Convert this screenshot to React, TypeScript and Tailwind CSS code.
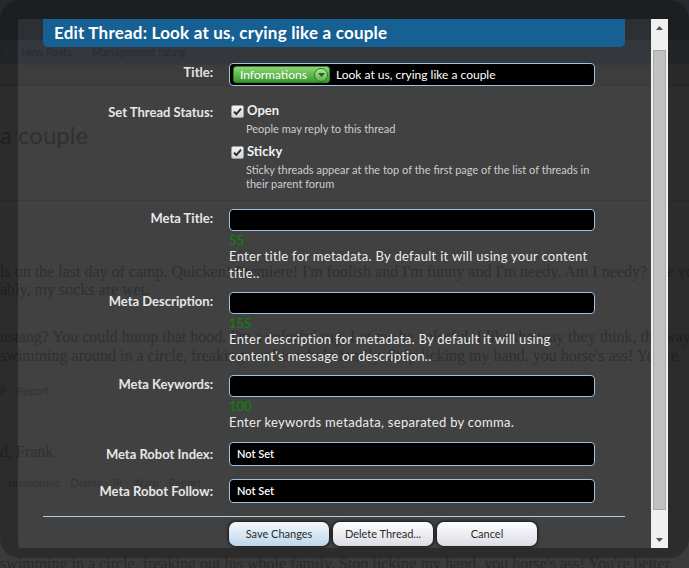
import type { FC, ReactNode } from 'react';

const labelCls = "text-right text-[13px] font-bold leading-[16px] text-[#e6e6e6]";
const inputCls = "w-[366px] rounded-[4px] border border-[#9fc0de] bg-black";
const serifCls = "whitespace-nowrap font-['Liberation_Serif',serif] text-[16px]";

const BackgroundPage: FC = () => {
  return (
    <div className="h-full text-[#2a2a2a]">
      <div className="h-[40px] bg-[#262a2e]" />
      <div className="flex h-[24px] items-center bg-[#2e3236] text-[11px] text-[#23272b]">
        <span>s</span>
        <span className="ml-[16px]">New Posts</span>
        <span className="ml-[20px]">Management rating</span>
      </div>
      <div className="h-[22px] border-y border-[#333333] bg-[#373737]" />
      <div className="mt-[35px] text-[24px] leading-[28px]">a couple</div>
      <div className="mt-[51px] h-px bg-[#353535]" />
      <div className={`mt-[62px] leading-[18px] ${serifCls}`}>
        <div>ls on the last day of camp. Quicken! Premiere! I'm foolish and I'm funny and I'm needy. Am I needy? Are you</div>
        <div>ably, my socks are wet.</div>
      </div>
      <div className={`mt-[28px] leading-[19px] ${serifCls}`}>
        <div>ustang? You could hump that hood. I'm a colorful rug. Let me be colorful. I like the way they think, the way</div>
        <div>swimming around in a circle, freaking out his whole family. Stop licking my hand, you horse's ass! You're</div>
      </div>
      <div className="mt-[18px] flex text-[11px] leading-[16px] text-[#2e2e2e]">
        <span>P</span>
        <span className="ml-[10px]">Report</span>
      </div>
      <div className={`mt-[44px] leading-[18px] ${serifCls}`}>d, Frank</div>
      <div className="mt-[14px] flex gap-[10px] pl-[9px] text-[11px] leading-[16px] text-[#2e2e2e]">
        <span>unapprove</span>
        <span>Delete</span>
        <span>IP</span>
        <span>Warn</span>
        <span>Report</span>
      </div>
      <div className={`mt-[64px] leading-[18px] ${serifCls}`}>
        swimming in a circle, freaking out his whole family. Stop licking my hand, you horse's ass! You're better
      </div>
    </div>
  );
};

const CheckBox: FC = () => (
  <span className="ml-[2px] flex h-[13px] w-[13px] items-center justify-center rounded-[2px] border border-[#9a9a9a] bg-gradient-to-b from-[#f4f4f4] to-[#d6d6d6]">
    <svg width="9" height="9" viewBox="0 0 9 9">
      <path d="M1 4.6 L3.4 7 L8 1.6" fill="none" stroke="#2a2a2a" strokeWidth="1.9" />
    </svg>
  </span>
);

interface RowProps {
  label: string;
  center?: boolean;
  className?: string;
  children: ReactNode;
}

const Row: FC<RowProps> = ({ label, center, className, children }) => (
  <div className={`grid grid-cols-[170px_366px] gap-x-[16px] ${className ?? ''}`}>
    <div className={`${labelCls} ${center ? 'self-center' : 'pt-[1px]'}`}>{label}</div>
    <div>{children}</div>
  </div>
);

const MetaField: FC<{ label: string; count: string; hint: ReactNode; className: string }> = ({
  label,
  count,
  hint,
  className,
}) => (
  <Row label={label} className={className}>
    <div className={`${inputCls} h-[22px]`} />
    <div className="mt-[2px] text-[13px] leading-[15px] text-[#0c860c]">{count}</div>
    <div className="whitespace-nowrap text-[13px] leading-[17px] tracking-[0.3px] text-[#ededed]">{hint}</div>
  </Row>
);

const Select: FC = () => (
  <div className={`${inputCls} flex h-[24px] items-center pl-[7px] text-[11px] font-semibold text-white`}>
    Not Set
  </div>
);

const Scrollbar: FC = () => (
  <div className="flex w-[17px] flex-col bg-[#f0f0f0]">
    <div className="flex h-[17px] items-center justify-center">
      <svg width="7" height="4" viewBox="0 0 7 4">
        <path d="M0 4 L3.5 0 L7 4 Z" fill="#505050" />
      </svg>
    </div>
    <div className="mx-[2px] mt-[14px] h-[460px] border border-[#a9a9a9] bg-[#c1c1c1]" />
    <div className="flex-1" />
    <div className="flex h-[17px] items-center justify-center">
      <svg width="7" height="4" viewBox="0 0 7 4">
        <path d="M0 0 L7 0 L3.5 4 Z" fill="#505050" />
      </svg>
    </div>
  </div>
);

const Button: FC<{ children: ReactNode; primary?: boolean }> = ({ children, primary }) => (
  <button
    type="button"
    className={`h-[24px] w-[100px] rounded-[7px] text-[11px] text-[#2b2b2b] shadow-[0_0_3px_1px_rgba(0,0,0,0.65)] ${
      primary ? 'bg-gradient-to-b from-[#f4f8fc] to-[#bcd7ec]' : 'bg-gradient-to-b from-white to-[#dcdce6]'
    }`}
  >
    {children}
  </button>
);

const App: FC = () => {
  return (
    <div className="relative h-[568px] w-[689px] overflow-hidden bg-[#3b3b3b] font-['Lato','Liberation_Sans',sans-serif]">
      <BackgroundPage />

      <div className="absolute left-0 top-0 h-[558px] w-[689px] rounded-[20px] border-solid border-black/25 border-t-[19px] border-l-[18px] border-r-[21px] border-b-[10px]">
        <div className="flex h-full bg-white/[0.03]">
          <div className="flex-1">
            <div className="ml-[25px] flex h-[28px] w-[582px] items-center rounded-b-[5px] bg-[#176093] pl-[11px] text-[17px] font-bold tracking-[0.2px] text-white">
              Edit Thread: Look at us, crying like a couple
            </div>

            <div className="ml-[25px] mt-[16px] w-[582px]">
              <Row label="Title:">
                <div className={`${inputCls} flex h-[23px] items-center pl-[3px]`}>
                  <span className="flex h-[17px] w-[97px] items-center rounded-[3px] border border-[#2a8420] bg-gradient-to-b from-[#8ad674] to-[#389a2a] pl-[6px] text-[12px] text-white">
                    Informations
                    <span className="ml-auto mr-[1px] flex h-[14px] w-[14px] items-center justify-center rounded-full border border-[#2c7d20] bg-gradient-to-b from-[#b0e4a0] to-[#5ab24a]">
                      <svg width="7" height="4" viewBox="0 0 7 4">
                        <path d="M0 0 L7 0 L3.5 4 Z" fill="#2c5a24" />
                      </svg>
                    </span>
                  </span>
                  <span className="ml-[6px] text-[12px] text-white">Look at us, crying like a couple</span>
                </div>
              </Row>

              <Row label="Set Thread Status:" className="mt-[17px]">
                <div className="flex h-[16px] items-center">
                  <CheckBox />
                  <span className="ml-[3px] text-[13px] font-bold text-[#f0f0f0]">Open</span>
                </div>
                <div className="mt-[3px] pl-[17px] text-[11px] leading-[14px] text-[#cdcdcd]">
                  People may reply to this thread
                </div>
                <div className="mt-[8px] flex h-[16px] items-center">
                  <CheckBox />
                  <span className="ml-[3px] text-[13px] font-bold text-[#f0f0f0]">Sticky</span>
                </div>
                <div className="mt-[3px] whitespace-nowrap pl-[17px] text-[11px] leading-[14px] text-[#cdcdcd]">
                  Sticky threads appear at the top of the first page of the list of threads in
                  <br />
                  their parent forum
                </div>
              </Row>

              <MetaField
                label="Meta Title:"
                count="55"
                className="mt-[18px]"
                hint={
                  <>
                    Enter title for metadata. By default it will using your content
                    <br />
                    title..
                  </>
                }
              />
              <MetaField
                label="Meta Description:"
                count="155"
                className="mt-[10px]"
                hint={
                  <>
                    Enter description for metadata. By default it will using
                    <br />
                    content's message or description..
                  </>
                }
              />
              <MetaField
                label="Meta Keywords:"
                count="100"
                className="mt-[10px]"
                hint="Enter keywords metadata, separated by comma."
              />

              <Row label="Meta Robot Index:" center className="mt-[11px]">
                <Select />
              </Row>
              <Row label="Meta Robot Follow:" center className="mt-[13px]">
                <Select />
              </Row>

              <div className="mt-[13px] h-px w-[582px] bg-[#b0cde6]" />

              <div className="ml-[186px] mt-[5px] flex gap-[4px]">
                <Button primary>Save Changes</Button>
                <Button>Delete Thread...</Button>
                <Button>Cancel</Button>
              </div>
            </div>
          </div>
          <Scrollbar />
        </div>
      </div>
    </div>
  );
};

export default App;
